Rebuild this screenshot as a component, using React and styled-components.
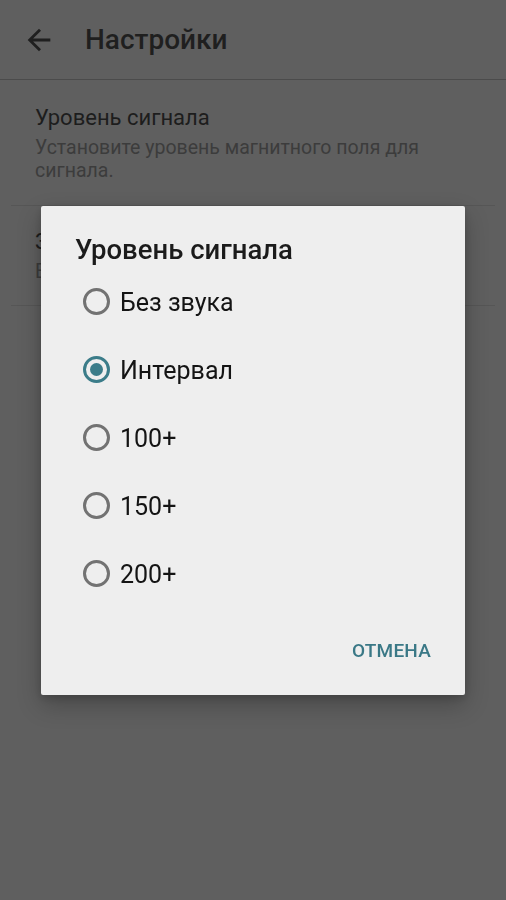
import React, { useState } from 'react';
import styled, { createGlobalStyle } from 'styled-components';

const GlobalStyle = createGlobalStyle`
  html, body {
    margin: 0;
    padding: 0;
    background: #5f5f5f;
  }
  body {
    font-family: Roboto, "Noto Sans", "Liberation Sans", sans-serif;
  }
`;

const Page = styled.div`
  width: 506px;
  min-height: 900px;
  background: #5f5f5f;
`;

const Toolbar = styled.header`
  height: 79px;
  display: flex;
  align-items: center;
  border-bottom: 1px solid #4b4b4b;
`;

const BackButton = styled.button`
  width: 34px;
  height: 34px;
  margin: 0 29px 0 22px;
  padding: 0;
  border: none;
  background: transparent;
  color: #1f1f1f;
  display: flex;
  align-items: center;
  justify-content: center;
`;

const ToolbarTitle = styled.h1`
  margin: 0;
  font-size: 28px;
  font-weight: 500;
  color: #1f1f1f;
`;

const PrefList = styled.div`
  display: flex;
  flex-direction: column;
`;

const PrefItem = styled.div`
  padding: ${(p) => (p.$first ? '25px 24px 23px' : '23px 24px 22px')};
  border-bottom: 1px solid #565656;
  margin: 0 11px;
`;

const PrefTitle = styled.div`
  font-size: 22px;
  line-height: 26px;
  color: #1d1d1d;
`;

const PrefSummary = styled.div`
  margin-top: 5px;
  font-size: 19.5px;
  line-height: 23px;
  color: #3c3c3c;
`;

const Overlay = styled.div`
  position: fixed;
  inset: 0;
  display: flex;
  align-items: center;
  justify-content: center;
`;

const Dialog = styled.div`
  width: 424px;
  height: 489px;
  box-sizing: border-box;
  background: #eeeeee;
  border-radius: 2px;
  box-shadow: 0 10px 24px rgba(0, 0, 0, 0.24), 0 3px 8px rgba(0, 0, 0, 0.16);
  display: flex;
  flex-direction: column;
  padding: 28px 0 26px;
`;

const DialogTitle = styled.h2`
  margin: 0 0 2px;
  padding: 0 34px;
  font-size: 27.5px;
  line-height: 32px;
  font-weight: 500;
  color: #1b1b1b;
`;

const Options = styled.div`
  display: flex;
  flex-direction: column;
`;

const OptionRow = styled.label`
  height: 68px;
  display: flex;
  align-items: center;
  gap: 10px;
  padding-left: 42px;
  cursor: pointer;
`;

const RadioCircle = styled.span`
  width: 27px;
  height: 27px;
  box-sizing: border-box;
  border-radius: 50%;
  border: 3px solid ${(p) => (p.$checked ? '#3b7c89' : '#727272')};
  display: flex;
  align-items: center;
  justify-content: center;
  flex-shrink: 0;

  &::after {
    content: '';
    width: 13px;
    height: 13px;
    border-radius: 50%;
    background: #3b7c89;
    display: ${(p) => (p.$checked ? 'block' : 'none')};
  }
`;

const OptionLabel = styled.span`
  font-size: 25px;
  color: #141414;
  margin-top: 1px;
`;

const Actions = styled.div`
  margin-top: auto;
  display: flex;
  justify-content: flex-end;
  padding-right: 26px;
`;

const TextButton = styled.button`
  height: 36px;
  padding: 0 8px;
  border: none;
  background: transparent;
  font-family: Roboto, "Noto Sans", sans-serif;
  font-size: 19px;
  font-weight: 500;
  color: #3a7886;
  text-transform: uppercase;
  letter-spacing: 0.2px;
`;

const options = ['Без звука', 'Интервал', '100+', '150+', '200+'];

function ArrowBack() {
  return (
    <svg width="34" height="34" viewBox="0 0 24 24" fill="currentColor">
      <path d="M20 11H7.83l5.59-5.59L12 4l-8 8 8 8 1.41-1.41L7.83 13H20v-2z" />
    </svg>
  );
}

export default function App() {
  const [selected, setSelected] = useState(1);

  return (
    <>
      <GlobalStyle />
      <Page>
        <Toolbar>
          <BackButton aria-label="Назад">
            <ArrowBack />
          </BackButton>
          <ToolbarTitle>Настройки</ToolbarTitle>
        </Toolbar>
        <PrefList>
          <PrefItem $first>
            <PrefTitle>Уровень сигнала</PrefTitle>
            <PrefSummary>Установите уровень магнитного поля для сигнала.</PrefSummary>
          </PrefItem>
          <PrefItem>
            <PrefTitle>Звук</PrefTitle>
            <PrefSummary>Вкл.</PrefSummary>
          </PrefItem>
        </PrefList>
      </Page>
      <Overlay>
        <Dialog>
          <DialogTitle>Уровень сигнала</DialogTitle>
          <Options>
            {options.map((o, i) => (
              <OptionRow key={o} onClick={() => setSelected(i)}>
                <RadioCircle $checked={selected === i} />
                <OptionLabel>{o}</OptionLabel>
              </OptionRow>
            ))}
          </Options>
          <Actions>
            <TextButton>Отмена</TextButton>
          </Actions>
        </Dialog>
      </Overlay>
    </>
  );
}
